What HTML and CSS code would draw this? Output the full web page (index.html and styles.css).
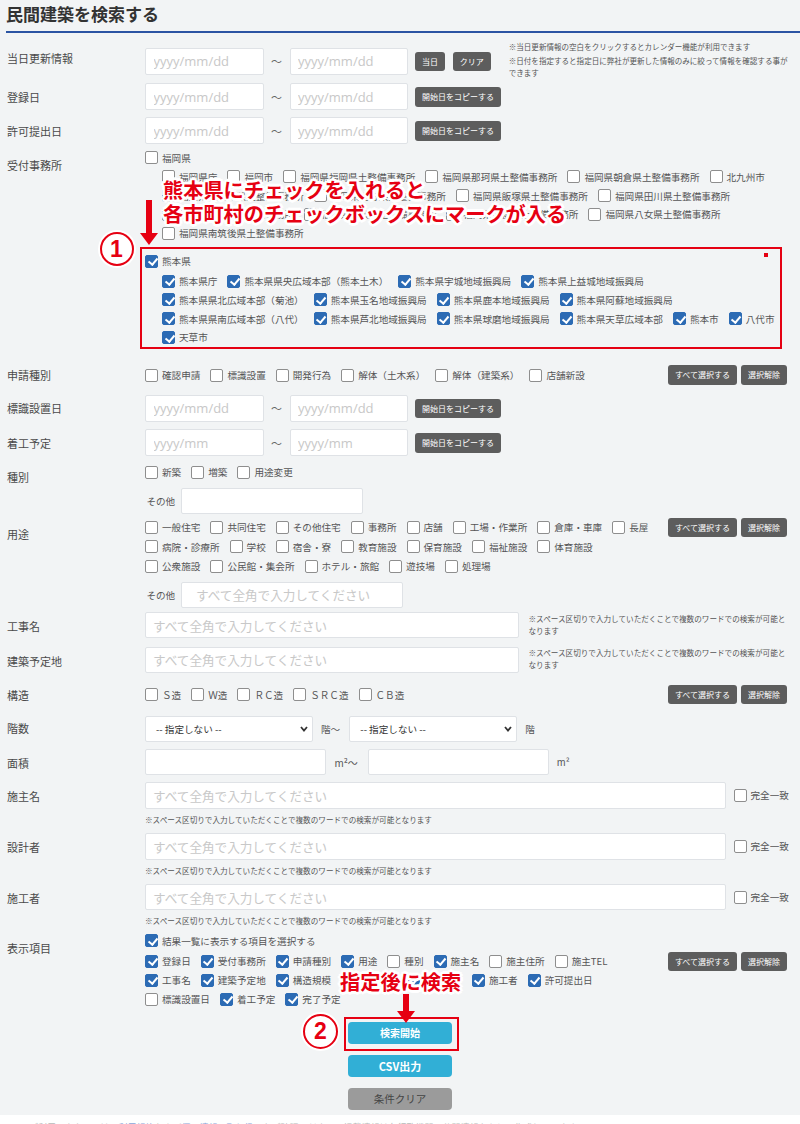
FILE: index.html
```html
<!DOCTYPE html>
<html lang="ja">
<head>
<meta charset="utf-8">
<title>民間建築を検索する</title>
<link rel="stylesheet" href="styles.css">
</head>
<body>
<div class="page">
  <h1 class="title">民間建築を検索する</h1>

  <div class="row row-a">
    <div class="label lp-a">当日更新情報</div>
    <div class="field field-a">
      <input class="input date" type="text" placeholder="yyyy/mm/dd">
      <span class="tilde">～</span>
      <input class="input date" type="text" placeholder="yyyy/mm/dd">
      <button class="btn btn-first" type="button">当日</button>
      <button class="btn btn-next" type="button">クリア</button>
      <div class="note-top">
        <p>※当日更新情報の空白をクリックするとカレンダー機能が利用できます</p>
        <p class="p2">※日付を指定すると指定日に弊社が更新した情報のみに絞って情報を確認する事ができます</p>
      </div>
    </div>
  </div>

  <div class="row row-b">
    <div class="label lp-5">登録日</div>
    <div class="field field-date">
      <input class="input date" type="text" placeholder="yyyy/mm/dd">
      <span class="tilde">～</span>
      <input class="input date" type="text" placeholder="yyyy/mm/dd">
      <button class="btn btn-first" type="button">開始日をコピーする</button>
    </div>
  </div>

  <div class="row row-c">
    <div class="label lp-5">許可提出日</div>
    <div class="field field-date">
      <input class="input date" type="text" placeholder="yyyy/mm/dd">
      <span class="tilde">～</span>
      <input class="input date" type="text" placeholder="yyyy/mm/dd">
      <button class="btn btn-first" type="button">開始日をコピーする</button>
    </div>
  </div>

  <div class="row row-d">
    <div class="label lp-9">受付事務所</div>
    <div class="field">
      <div class="pref">
        <div class="line"><label class="chk"><span class="cb"></span>福岡県</label></div>
        <div class="subs">
          <div class="sline">
            <label class="chk"><span class="cb"></span>福岡県庁</label>
            <label class="chk"><span class="cb"></span>福岡市</label>
            <label class="chk"><span class="cb"></span>福岡県福岡県土整備事務所</label>
            <label class="chk"><span class="cb"></span>福岡県那珂県土整備事務所</label>
            <label class="chk"><span class="cb"></span>福岡県朝倉県土整備事務所</label>
            <label class="chk"><span class="cb"></span>北九州市</label>
          </div>
          <div class="sline">
            <label class="chk"><span class="cb"></span>福岡県北九州県土整備事務所</label>
            <label class="chk"><span class="cb"></span>福岡県直方県土整備事務所</label>
            <label class="chk"><span class="cb"></span>福岡県飯塚県土整備事務所</label>
            <label class="chk"><span class="cb"></span>福岡県田川県土整備事務所</label>
          </div>
          <div class="sline">
            <label class="chk"><span class="cb"></span>福岡県八幡県土整備事務所</label>
            <label class="chk"><span class="cb"></span>福岡県京築県土整備事務所</label>
            <label class="chk"><span class="cb"></span>福岡県宗像県土整備事務所</label>
            <label class="chk"><span class="cb"></span>福岡県八女県土整備事務所</label>
          </div>
          <div class="sline">
            <label class="chk"><span class="cb"></span>福岡県南筑後県土整備事務所</label>
          </div>
        </div>
      </div>

      <div class="pref pref-box">
        <span class="dot"></span>
        <div class="line"><label class="chk"><span class="cb on"></span>熊本県</label></div>
        <div class="subs subs-box">
          <div class="sline">
            <label class="chk"><span class="cb on"></span>熊本県庁</label>
            <label class="chk"><span class="cb on"></span>熊本県県央広域本部（熊本土木）</label>
            <label class="chk"><span class="cb on"></span>熊本県宇城地域振興局</label>
            <label class="chk"><span class="cb on"></span>熊本県上益城地域振興局</label>
          </div>
          <div class="sline">
            <label class="chk"><span class="cb on"></span>熊本県県北広域本部（菊池）</label>
            <label class="chk"><span class="cb on"></span>熊本県玉名地域振興局</label>
            <label class="chk"><span class="cb on"></span>熊本県鹿本地域振興局</label>
            <label class="chk"><span class="cb on"></span>熊本県阿蘇地域振興局</label>
          </div>
          <div class="sline">
            <label class="chk"><span class="cb on"></span>熊本県県南広域本部（八代）</label>
            <label class="chk"><span class="cb on"></span>熊本県芦北地域振興局</label>
            <label class="chk"><span class="cb on"></span>熊本県球磨地域振興局</label>
            <label class="chk"><span class="cb on"></span>熊本県天草広域本部</label>
            <label class="chk"><span class="cb on"></span>熊本市</label>
            <label class="chk"><span class="cb on"></span>八代市</label>
          </div>
          <div class="sline">
            <label class="chk"><span class="cb on"></span>天草市</label>
          </div>
        </div>
      </div>
    </div>
  </div>

  <div class="row row-e">
    <div class="label lp-2">申請種別</div>
    <div class="field with-btns">
      <div class="line line-e">
        <label class="chk"><span class="cb"></span>確認申請</label>
        <label class="chk"><span class="cb"></span>標識設置</label>
        <label class="chk"><span class="cb"></span>開発行為</label>
        <label class="chk"><span class="cb"></span>解体（土木系）</label>
        <label class="chk"><span class="cb"></span>解体（建築系）</label>
        <label class="chk"><span class="cb"></span>店舗新設</label>
      </div>
      <div class="btns">
        <button class="btn" type="button">すべて選択する</button>
        <button class="btn" type="button">選択解除</button>
      </div>
    </div>
  </div>

  <div class="row row-f">
    <div class="label lp-5">標識設置日</div>
    <div class="field field-date">
      <input class="input date" type="text" placeholder="yyyy/mm/dd">
      <span class="tilde">～</span>
      <input class="input date" type="text" placeholder="yyyy/mm/dd">
      <button class="btn btn-first" type="button">開始日をコピーする</button>
    </div>
  </div>

  <div class="row row-g">
    <div class="label lp-5">着工予定</div>
    <div class="field field-date">
      <input class="input date" type="text" placeholder="yyyy/mm">
      <span class="tilde">～</span>
      <input class="input date" type="text" placeholder="yyyy/mm">
      <button class="btn btn-first" type="button">開始日をコピーする</button>
    </div>
  </div>

  <div class="row row-h">
    <div class="label lp-6">種別</div>
    <div class="field">
      <div class="line">
        <label class="chk"><span class="cb"></span>新築</label>
        <label class="chk"><span class="cb"></span>増築</label>
        <label class="chk"><span class="cb"></span>用途変更</label>
      </div>
      <div class="sub sub-h">
        <span class="sub-label">その他</span>
        <input class="input other-short" type="text">
      </div>
    </div>
  </div>

  <div class="row row-i">
    <div class="label lp-9">用途</div>
    <div class="field">
      <div class="with-btns">
        <div class="lines">
          <div class="line line-i">
            <label class="chk"><span class="cb"></span>一般住宅</label>
            <label class="chk"><span class="cb"></span>共同住宅</label>
            <label class="chk"><span class="cb"></span>その他住宅</label>
            <label class="chk"><span class="cb"></span>事務所</label>
            <label class="chk"><span class="cb"></span>店舗</label>
            <label class="chk"><span class="cb"></span>工場・作業所</label>
            <label class="chk"><span class="cb"></span>倉庫・車庫</label>
            <label class="chk"><span class="cb"></span>長屋</label>
          </div>
          <div class="line line-i">
            <label class="chk"><span class="cb"></span>病院・診療所</label>
            <label class="chk"><span class="cb"></span>学校</label>
            <label class="chk"><span class="cb"></span>宿舎・寮</label>
            <label class="chk"><span class="cb"></span>教育施設</label>
            <label class="chk"><span class="cb"></span>保育施設</label>
            <label class="chk"><span class="cb"></span>福祉施設</label>
            <label class="chk"><span class="cb"></span>体育施設</label>
          </div>
          <div class="line line-i">
            <label class="chk"><span class="cb"></span>公衆施設</label>
            <label class="chk"><span class="cb"></span>公民館・集会所</label>
            <label class="chk"><span class="cb"></span>ホテル・旅館</label>
            <label class="chk"><span class="cb"></span>遊技場</label>
            <label class="chk"><span class="cb"></span>処理場</label>
          </div>
        </div>
        <div class="btns btns-i">
          <button class="btn" type="button">すべて選択する</button>
          <button class="btn" type="button">選択解除</button>
        </div>
      </div>
      <div class="sub sub-i">
        <span class="sub-label">その他</span>
        <input class="input other-long" type="text" placeholder="すべて全角で入力してください">
      </div>
    </div>
  </div>

  <div class="row row-j">
    <div class="label lp-6">工事名</div>
    <div class="field field-text">
      <input class="input text-mid" type="text" placeholder="すべて全角で入力してください">
      <p class="note-side">※スペース区切りで入力していただくことで複数のワードでの検索が可能となります</p>
    </div>
  </div>

  <div class="row row-k">
    <div class="label lp-6">建築予定地</div>
    <div class="field field-text">
      <input class="input text-mid" type="text" placeholder="すべて全角で入力してください">
      <p class="note-side">※スペース区切りで入力していただくことで複数のワードでの検索が可能となります</p>
    </div>
  </div>

  <div class="row row-l">
    <div class="label lp-2">構造</div>
    <div class="field with-btns">
      <div class="line line-e">
        <label class="chk"><span class="cb"></span>Ｓ造</label>
        <label class="chk"><span class="cb"></span>Ｗ造</label>
        <label class="chk"><span class="cb"></span>ＲＣ造</label>
        <label class="chk"><span class="cb"></span>ＳＲＣ造</label>
        <label class="chk"><span class="cb"></span>ＣＢ造</label>
      </div>
      <div class="btns">
        <button class="btn" type="button">すべて選択する</button>
        <button class="btn" type="button">選択解除</button>
      </div>
    </div>
  </div>

  <div class="row row-m">
    <div class="label lp-4">階数</div>
    <div class="field field-text">
      <div class="select"><span>-- 指定しない --</span><svg class="chev" width="8" height="6" viewBox="0 0 8 6"><polyline points="1,1 4,4.5 7,1" fill="none" stroke="#333" stroke-width="1.8"/></svg></div>
      <span class="unit unit-floor">階～</span>
      <div class="select"><span>-- 指定しない --</span><svg class="chev" width="8" height="6" viewBox="0 0 8 6"><polyline points="1,1 4,4.5 7,1" fill="none" stroke="#333" stroke-width="1.8"/></svg></div>
      <span class="unit unit-end">階</span>
    </div>
  </div>

  <div class="row row-n">
    <div class="label lp-6">面積</div>
    <div class="field field-text">
      <input class="input area" type="text">
      <span class="unit unit-area">m²～</span>
      <input class="input area" type="text">
      <span class="unit unit-end">m²</span>
    </div>
  </div>

  <div class="row row-o">
    <div class="label lp-6">施主名</div>
    <div class="field">
      <div class="field-text">
        <input class="input text-wide" type="text" placeholder="すべて全角で入力してください">
        <label class="chk chk-exact"><span class="cb"></span>完全一致</label>
      </div>
      <p class="note-under">※スペース区切りで入力していただくことで複数のワードでの検索が可能となります</p>
    </div>
  </div>

  <div class="row row-p">
    <div class="label lp-5">設計者</div>
    <div class="field">
      <div class="field-text">
        <input class="input text-wide" type="text" placeholder="すべて全角で入力してください">
        <label class="chk chk-exact"><span class="cb"></span>完全一致</label>
      </div>
      <p class="note-under">※スペース区切りで入力していただくことで複数のワードでの検索が可能となります</p>
    </div>
  </div>

  <div class="row row-q">
    <div class="label lp-6">施工者</div>
    <div class="field">
      <div class="field-text">
        <input class="input text-wide" type="text" placeholder="すべて全角で入力してください">
        <label class="chk chk-exact"><span class="cb"></span>完全一致</label>
      </div>
      <p class="note-under">※スペース区切りで入力していただくことで複数のワードでの検索が可能となります</p>
    </div>
  </div>

  <div class="row row-r">
    <div class="label lp-9">表示項目</div>
    <div class="field">
      <div class="line"><label class="chk"><span class="cb on"></span>結果一覧に表示する項目を選択する</label></div>
      <div class="with-btns with-btns-r">
        <div class="lines">
          <div class="line">
            <label class="chk"><span class="cb on"></span>登録日</label>
            <label class="chk"><span class="cb on"></span>受付事務所</label>
            <label class="chk"><span class="cb on"></span>申請種別</label>
            <label class="chk"><span class="cb on"></span>用途</label>
            <label class="chk"><span class="cb"></span>種別</label>
            <label class="chk"><span class="cb on"></span>施主名</label>
            <label class="chk"><span class="cb"></span>施主住所</label>
            <label class="chk"><span class="cb"></span>施主TEL</label>
          </div>
          <div class="line">
            <label class="chk"><span class="cb on"></span>工事名</label>
            <label class="chk"><span class="cb on"></span>建築予定地</label>
            <label class="chk"><span class="cb on"></span>構造規模</label>
            <label class="chk"><span class="cb on"></span>建築面積</label>
            <label class="chk"><span class="cb on"></span>延床面積</label>
            <label class="chk"><span class="cb on"></span>施工者</label>
            <label class="chk"><span class="cb on"></span>許可提出日</label>
          </div>
          <div class="line">
            <label class="chk"><span class="cb"></span>標識設置日</label>
            <label class="chk"><span class="cb on"></span>着工予定</label>
            <label class="chk"><span class="cb on"></span>完了予定</label>
          </div>
        </div>
        <div class="btns">
          <button class="btn" type="button">すべて選択する</button>
          <button class="btn" type="button">選択解除</button>
        </div>
      </div>
    </div>
  </div>

  <div class="actions">
    <button class="btn-big btn-search" type="button">検索開始</button>
    <button class="btn-big btn-csv" type="button">CSV出力</button>
    <button class="btn-big btn-clear" type="button">条件クリア</button>
  </div>

  <div class="footer">
    <p>※ご利用にあたっては、<span class="link">利用規約</span>および<span class="link">個人情報の取り扱い</span>をご確認ください。掲載情報は各行政機関の公開情報をもとに作成しています。</p>
  </div>

  <!-- annotations -->
  <div class="anno anno-1">熊本県にチェックを入れると<br>各市町村のチェックボックスにマークが入る</div>
  <svg class="arrow arrow-1" width="18" height="46" viewBox="0 0 18 46"><rect x="6" y="0" width="6" height="34" fill="#e60012"/><polygon points="0,33 18,33 9,45" fill="#e60012"/></svg>
  <div class="circle circle-1">1</div>

  <div class="anno anno-2">指定後に検索</div>
  <svg class="arrow arrow-2" width="18" height="30" viewBox="0 0 18 30"><rect x="6" y="0" width="6" height="18" fill="#e60012"/><polygon points="0,17 18,17 9,29" fill="#e60012"/></svg>
  <div class="hl-box"></div>
  <div class="circle circle-2">2</div>
</div>
</body>
</html>
```

FILE: styles.css
```css
* { box-sizing: border-box; }
html, body { margin: 0; padding: 0; }
body {
  width: 800px;
  height: 1124px;
  overflow: hidden;
  background: #f2f4f5;
  font-family: "Noto Sans CJK JP", "Noto Sans", sans-serif;
  color: #4a4a4a;
}
p { margin: 0; }
.page {
  position: relative;
  padding: 0 13px 0 7px;
}
.title {
  margin: 0 -13px 0 -1px;
  height: 33px;
  padding-top: 3px;
  font-size: 17px;
  line-height: 22px;
  font-weight: bold;
  color: #333;
  border-bottom: 2px solid #2b54a3;
}

/* rows */
.row { display: flex; align-items: flex-start; }
.label {
  flex: 0 0 138px;
  font-size: 11px;
  line-height: 16px;
  color: #4a4a4a;
  white-space: nowrap;
}
.lp-a { padding-top: 9.6px; }
.lp-2 { padding-top: 1.8px; }
.lp-4 { padding-top: 4.3px; }
.lp-5 { padding-top: 5.5px; }
.lp-6 { padding-top: 6px; }
.lp-9 { padding-top: 8.7px; }
.field { flex: 1; min-width: 0; }

.row-a { margin-top: 7.7px; }
.row-b { margin-top: 4.9px; }
.row-c { margin-top: 7px; }
.row-d { margin-top: 4px; }
.row-e { margin-top: 16px; }
.row-f { margin-top: 10px; }
.row-g { margin-top: 7.5px; }
.row-h { margin-top: 6.5px; }
.row-i { margin-top: 3.2px; }
.row-j { margin-top: 4px; }
.row-k { margin-top: 8.4px; }
.row-l { margin-top: 12.3px; }
.row-m { margin-top: 11.2px; }
.row-n { margin-top: 7.6px; }
.row-o { margin-top: 7px; }
.row-p { margin-top: 7.5px; }
.row-q { margin-top: 7.2px; }
.row-r { margin-top: 4px; }

/* inputs */
.input {
  display: block;
  flex: none;
  height: 26px;
  margin: 0;
  padding: 0 0 0 7px;
  border: 1px solid #dfe2e6;
  border-radius: 2px;
  background: #fff;
  font-family: "Noto Sans CJK JP", "Noto Sans", sans-serif;
  font-size: 12.6px;
  color: #333;
  outline: none;
}
.input::placeholder { color: #c8c8c8; }
.date {
  width: 118.5px;
  height: 27px;
  padding-left: 7.5px;
  font-family: "Open Sans", "Noto Sans", sans-serif;
  font-size: 13px;
}
.tilde {
  flex: none;
  width: 26px;
  text-align: center;
  font-size: 11px;
  color: #666;
}
.field-a, .field-date, .field-text { display: flex; align-items: center; }
.field-a { align-items: flex-start; }
.field-a .input, .field-a .tilde { margin-top: 7.3px; }
.field-a .tilde { line-height: 27px; }
.field-a .btn { margin-top: 11px; }

/* buttons */
.btn {
  flex: none;
  height: 19.5px;
  padding: 0 7px;
  border: none;
  border-radius: 3px;
  background: #5d5d5d;
  color: #fff;
  font-family: "Noto Sans CJK JP", sans-serif;
  font-size: 8px;
  line-height: 19.5px;
  white-space: nowrap;
}
.btn-first { margin-left: 7px; }
.btn-next { margin-left: 7.7px; }
.btns { display: flex; gap: 4px; margin-left: auto; flex: none; }
.with-btns { display: flex; align-items: flex-start; }
.lines { flex: 1; }

.note-top {
  flex: none;
  width: 284px;
  margin-left: 18px;
  font-size: 7.55px;
  color: #555;
}
.note-top p { line-height: 12px; }
.note-top .p2 { margin-top: 2.5px; line-height: 11.7px; }

/* checkboxes */
.line { display: flex; align-items: center; height: 19px; }
.line-e { height: 19.5px; }
.line-i { height: 19.5px; }
.sline { display: flex; align-items: center; height: 18.75px; }
.subs { padding-left: 17px; }
.subs-box { margin-top: 1.2px; }
.chk {
  display: inline-flex;
  align-items: center;
  flex: none;
  margin-right: 10px;
  font-size: 9.6px;
  line-height: 14px;
  color: #555;
  white-space: nowrap;
}
.cb {
  position: relative;
  flex: none;
  width: 13px;
  height: 13px;
  margin-right: 4px;
  border: 1px solid #8e8e8e;
  border-radius: 2px;
  background: #fff;
}
.cb.on { background: #2c6bb4; border-color: #2c6bb4; }
.cb.on::after {
  content: "";
  position: absolute;
  left: 3.6px;
  top: 0.6px;
  width: 3.6px;
  height: 7.4px;
  border: solid #fff;
  border-width: 0 2px 2px 0;
  transform: rotate(40deg);
}

.pref-box {
  position: relative;
  margin: 4.2px 5.3px 0 -5px;
  padding: 3px 0 0.5px 3px;
  border: 2px solid #e50012;
}
.dot {
  position: absolute;
  right: 11.5px;
  top: 4.6px;
  width: 4px;
  height: 4px;
  background: #e50012;
}

/* sub rows */
.sub { display: flex; align-items: center; }
.sub-h { margin-top: 6.4px; }
.sub-i { margin-top: 5.7px; }
.sub-label { flex: none; width: 36px; font-size: 9.6px; color: #555; padding-left: 1.4px; }
.other-short { width: 182px; }
.other-long { width: 222px; height: 26.6px; padding-left: 14px; }
.btns-i { margin-top: 0.5px; }

.text-mid { width: 373.5px; }
.note-side {
  width: 264px;
  margin-left: 10px;
  font-size: 7.6px;
  line-height: 12px;
  color: #555;
}
.row-j .note-side, .row-k .note-side { margin-top: -1px; }

.select {
  flex: none;
  display: flex;
  align-items: center;
  justify-content: space-between;
  width: 168px;
  height: 26px;
  padding: 0 4px 0 10px;
  background: #fff;
  border: 1px solid #dfe2e6;
  border-radius: 2px;
  font-size: 9.6px;
  color: #333;
}
.chev { display: block; }
.unit { flex: none; font-size: 9.6px; color: #555; }
.unit-floor { width: 36.3px; padding-left: 8px; }
.unit-end { padding-left: 8px; }
.unit-area { width: 41.8px; padding-left: 8.5px; font-size: 10px; }
.area { width: 181px; }

.text-wide { width: 581px; height: 26.5px; }
.chk-exact { margin-left: 7.5px; margin-right: 0; }
.note-under {
  margin-top: 5px;
  font-size: 7.6px;
  line-height: 12px;
  color: #555;
}

.with-btns-r { margin-top: 1.5px; }

/* action buttons */
.actions {
  display: flex;
  flex-direction: column;
  align-items: center;
  gap: 10.8px;
  margin: 12.7px -13px 0 -7px;
}
.btn-big {
  width: 104px;
  height: 22.3px;
  border: none;
  border-radius: 4px;
  font-family: "Noto Sans CJK JP", sans-serif;
  padding: 0;
}
.btn-search, .btn-csv {
  background: #31afd6;
  color: #fff;
  font-weight: bold;
  font-size: 10px;
}
.btn-csv { font-size: 11px; }
.btn-clear {
  background: #9b9b9b;
  color: #444;
  font-size: 10.5px;
}

.footer {
  margin: 4.7px -13px 0 -7px;
  height: 40px;
  padding: 6px 20px 0;
  background: #fff;
  font-size: 9px;
  color: #b8b8b8;
  white-space: nowrap;
}
.footer .link { color: #8aa4d8; }

/* annotations */
.anno {
  position: absolute;
  color: #e60012;
  font-weight: bold;
  font-size: 20.2px;
  line-height: 24px;
  white-space: nowrap;
  text-shadow:
    2px 0 0 #fff, -2px 0 0 #fff, 0 2px 0 #fff, 0 -2px 0 #fff,
    2px 2px 0 #fff, -2px -2px 0 #fff, 2px -2px 0 #fff, -2px 2px 0 #fff,
    3px 0 0 #fff, -3px 0 0 #fff, 0 3px 0 #fff, 0 -3px 0 #fff;
}
.anno-1 { left: 163px; top: 178px; }
.anno-2 { left: 340px; top: 969.5px; }
.arrow { position: absolute; display: block; }
.arrow-1 { left: 140px; top: 200px; }
.arrow-2 { left: 397px; top: 994px; }
.circle {
  position: absolute;
  display: flex;
  align-items: center;
  justify-content: center;
  width: 34px;
  height: 34px;
  border: 2.5px solid #e60012;
  border-radius: 50%;
  background: #fff;
  box-shadow: 0 0 0 2px #fff;
  color: #e60012;
  font-family: "Liberation Sans", "Noto Sans", sans-serif;
  font-size: 23px;
  font-weight: bold;
  line-height: 1;
}
.circle-1 { left: 99.5px; top: 232px; }
.circle-2 { left: 303px; top: 1014px; width: 35px; height: 35px; }
.hl-box {
  position: absolute;
  left: 344px;
  top: 1016.7px;
  width: 115px;
  height: 34px;
  border: 2px solid #e60012;
}
```
